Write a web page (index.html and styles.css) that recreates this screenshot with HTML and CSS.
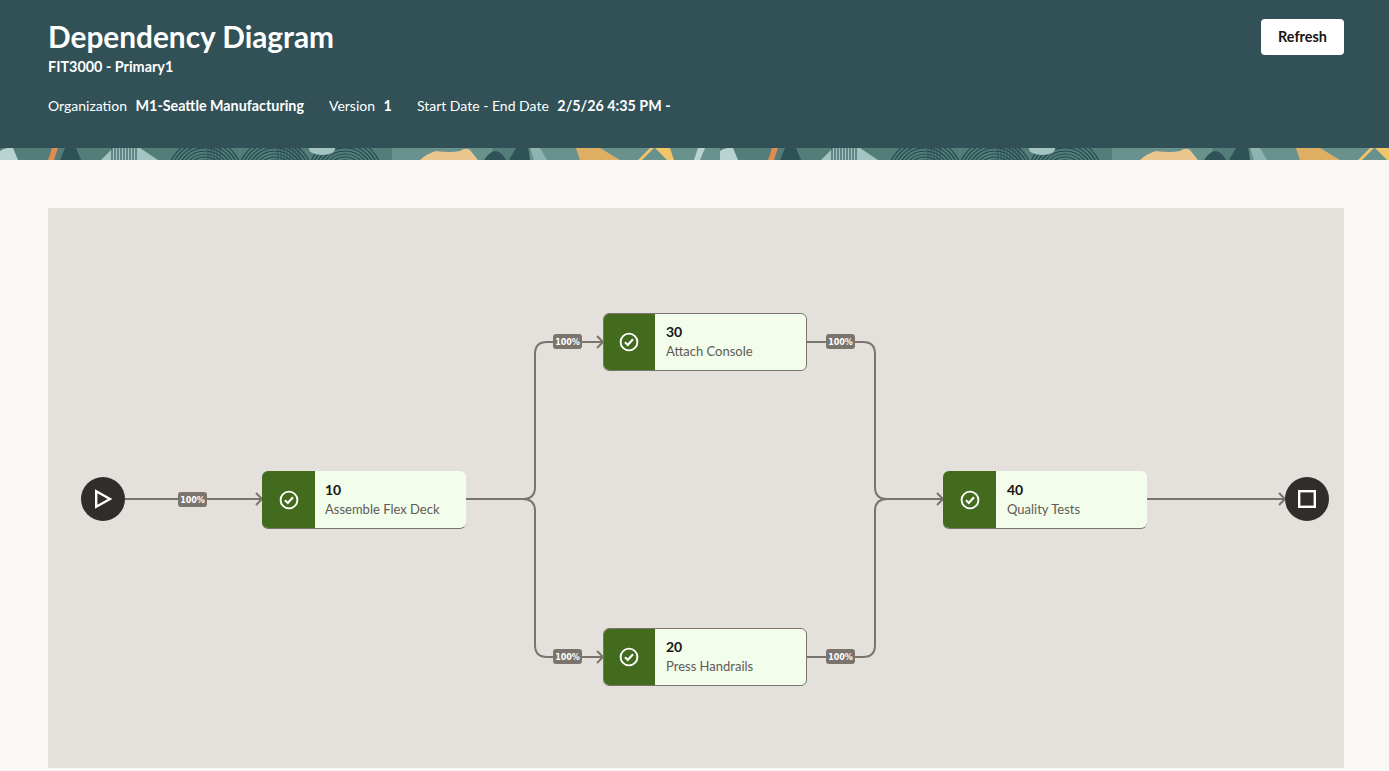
FILE: index.html
```html
<!DOCTYPE html>
<html lang="en">
<head>
    <meta charset="UTF-8">
    <title>Dependency Diagram</title>
    <link rel="stylesheet" href="styles.css">
</head>
<body>

<header class="top">
    <div class="top-text">
        <h1 class="title">Dependency Diagram</h1>
        <div class="subtitle">FIT3000 - Primary1</div>
        <div class="meta">
            <span class="meta-item">Organization <strong>M1-Seattle Manufacturing</strong></span>
            <span class="meta-item">Version <strong>1</strong></span>
            <span class="meta-item">Start Date - End Date <strong>2/5/26 4:35 PM -</strong></span>
        </div>
    </div>
    <button class="refresh" type="button">Refresh</button>
</header>

<!-- decorative band, repeats every 720px -->
<svg class="band" width="1389" height="12" xmlns="http://www.w3.org/2000/svg">
    <defs>
        <g id="rings" fill="none" stroke="#24474c" stroke-width="1.2">
            <circle r="16"/><circle r="19"/><circle r="22"/><circle r="25"/><circle r="28"/>
            <circle r="31"/><circle r="34"/><circle r="37"/>
        </g>
        <pattern id="bandtile" width="720" height="12" patternUnits="userSpaceOnUse">
            <rect width="720" height="12" fill="#527d79"/>
            <path d="M0 12V3Q6 -1 13 0L18 12Z" fill="#b9d3d3"/>
            <path d="M52 0H58L54 12H48Z" fill="#e08c50"/>
            <path d="M60 12L65 0H76L81 12Z" fill="#2f5257"/>
            <path d="M101 12L113 0H140L158 12Z" fill="#a3c4c0"/>
            <path d="M112 12V0M115 12V0M118 12V0M121 12V0M124 12V0M127 12V0M130 12V0M133 12V0M136 12V0" stroke="#24474c" stroke-width="1"/>
            <use href="#rings" x="205" y="28"/>
            <use href="#rings" x="275" y="28"/>
            <use href="#rings" x="345" y="28"/>
            <path d="M208 0V12M211 0V12M214 0V12M217 0V12M220 0V12M278 0V12M281 0V12M284 0V12M287 0V12M290 0V12M293 0V12M296 0V12M299 0V12" stroke="#24474c" stroke-width="0.8"/>
            <ellipse cx="322" cy="1" rx="13" ry="6" fill="#a3c4c0"/>
            <rect x="392" width="100" height="12" fill="#69918d"/>
            <path d="M420 12Q426 6 436 3Q450 5 460 3Q466 -1 470 2L478 12Z" fill="#e8c68e"/>
            <path d="M484 12Q490 3 496 3Q502 4 506 12Z" fill="#2f5257"/>
            <path d="M509 12L516 0H528L530 12Z" fill="#2f5257"/>
            <rect x="530" width="190" height="12" fill="#69918d"/>
            <path d="M530 0H540L547 12H534Z" fill="#8fb3b0"/>
            <path d="M576 0H600L620 12H580Z" fill="#deaf63"/>
            <path d="M650 0H654L642 12H638Z" fill="#f0c468"/>
            <path d="M655 0H670L674 12H667Z" fill="#f0c468"/>
            <path d="M694 12L698 0H705L700 12Z" fill="#b9d3d3"/>
        </pattern>
    </defs>
    <rect width="1389" height="12" fill="url(#bandtile)"/>
</svg>

<main class="content">
    <div class="diagram">
        <svg class="edges" width="1296" height="560" xmlns="http://www.w3.org/2000/svg">
            <g fill="none" stroke="#7a746d" stroke-width="2">
                <path d="M77 291H214"/>
                <path d="M418 291H475Q487 291 487 279V146Q487 134 499 134H555"/>
                <path d="M418 291H475Q487 291 487 303V437Q487 449 499 449H555"/>
                <path d="M759 134H815Q827 134 827 146V279Q827 291 839 291H895"/>
                <path d="M759 449H815Q827 449 827 437V303Q827 291 839 291H895"/>
                <path d="M1099 291H1237"/>
                <path d="M208 285L214 291L208 297"/>
                <path d="M549 128L555 134L549 140"/>
                <path d="M549 443L555 449L549 455"/>
                <path d="M889 285L895 291L889 297"/>
                <path d="M1231 285L1237 291L1231 297"/>
            </g>
        </svg>

        <div class="terminal start">
            <svg width="20" height="20" viewBox="0 0 20 20"><path d="M3.2 2.2L17 10L3.2 17.8Z" fill="none" stroke="#fff" stroke-width="2.4"/></svg>
        </div>
        <div class="terminal end">
            <svg width="20" height="20" viewBox="0 0 20 20"><rect x="2.2" y="2.2" width="15.6" height="15.6" fill="none" stroke="#fff" stroke-width="2.4"/></svg>
        </div>

        <span class="pct pct-a">100%</span>
        <span class="pct pct-b">100%</span>
        <span class="pct pct-c">100%</span>
        <span class="pct pct-d">100%</span>
        <span class="pct pct-e">100%</span>

        <div class="node node-10">
            <div class="node-icon"><svg width="20" height="20" viewBox="0 0 20 20"><circle cx="10" cy="10" r="8.4" fill="none" stroke="#fff" stroke-width="1.9"/><path d="M6 10.3L8.8 13L14 7.3" fill="none" stroke="#fff" stroke-width="2.2"/></svg></div>
            <div class="node-text"><strong>10</strong><span>Assemble Flex Deck</span></div>
        </div>
        <div class="node node-30">
            <div class="node-icon"><svg width="20" height="20" viewBox="0 0 20 20"><circle cx="10" cy="10" r="8.4" fill="none" stroke="#fff" stroke-width="1.9"/><path d="M6 10.3L8.8 13L14 7.3" fill="none" stroke="#fff" stroke-width="2.2"/></svg></div>
            <div class="node-text"><strong>30</strong><span>Attach Console</span></div>
        </div>
        <div class="node node-20">
            <div class="node-icon"><svg width="20" height="20" viewBox="0 0 20 20"><circle cx="10" cy="10" r="8.4" fill="none" stroke="#fff" stroke-width="1.9"/><path d="M6 10.3L8.8 13L14 7.3" fill="none" stroke="#fff" stroke-width="2.2"/></svg></div>
            <div class="node-text"><strong>20</strong><span>Press Handrails</span></div>
        </div>
        <div class="node node-40">
            <div class="node-icon"><svg width="20" height="20" viewBox="0 0 20 20"><circle cx="10" cy="10" r="8.4" fill="none" stroke="#fff" stroke-width="1.9"/><path d="M6 10.3L8.8 13L14 7.3" fill="none" stroke="#fff" stroke-width="2.2"/></svg></div>
            <div class="node-text"><strong>40</strong><span>Quality Tests</span></div>
        </div>
    </div>
</main>

</body>
</html>
```

FILE: styles.css
```css
*{
    padding: 0;
    margin: 0;
    box-sizing: border-box;
}
body {
    background-color: #F9F8F6;
    font-family: Lato, "Noto Sans", sans-serif;
    font-size: 14px;
    color: #161513;
    height: 771px;
    overflow: hidden;
}

.top{
    display: flex;
    justify-content: space-between;
    align-items: flex-start;
    height: 148px;
    padding: 19px 45px 0 48px;
    background-color: #315157;
    color: #FFFFFF;
}

.title{
    font-size: 29.8px;
    line-height: 36px;
    font-weight: 700;
}

.subtitle{
    font-size: 14.4px;
    line-height: 18px;
    margin-top: 3px;
    font-weight: 700;
}

.meta{
    display: flex;
    gap: 25px;
    margin-top: 20px;
    line-height: 20px;
}

.meta strong{
    margin-left: 5px;
    font-size: 14.3px;
}

.refresh{
    width: 83px;
    height: 36px;
    padding-bottom: 2px;
    background-color: #FFFFFF;
    color: #161513;
    border: 0;
    border-radius: 4px;
    font-family: inherit;
    font-size: 14.4px;
    font-weight: 700;
}

.band{
    display: block;
}

.content{
    padding: 48px 45px 0 48px;
}

.diagram{
    position: relative;
    height: 560px;
    background-color: #E4E1DC;
}

.edges{
    position: absolute;
    left: 0;
    top: 0;
}

.terminal{
    position: absolute;
    top: 269px;
    width: 44px;
    height: 44px;
    border-radius: 50%;
    background-color: #312D2A;
    display: flex;
    align-items: center;
    justify-content: center;
}

.start{ left: 33px; }
.end{ left: 1237px; }

.pct{
    position: absolute;
    width: 29px;
    height: 15px;
    border-radius: 3px;
    background-color: #7A746D;
    color: #FFFFFF;
    font-family: "DejaVu Sans", sans-serif;
    font-size: 8px;
    line-height: 17px;
    font-weight: 700;
    text-align: center;
}

.pct-a{ left: 130px; top: 284px; }
.pct-b{ left: 505px; top: 126px; }
.pct-c{ left: 505px; top: 441px; }
.pct-d{ left: 778px; top: 126px; }
.pct-e{ left: 778px; top: 441px; }

.node{
    position: absolute;
    display: flex;
    width: 204px;
    height: 58px;
    border: 1px solid #7A746D;
    border-radius: 6px;
    background-color: #F2FDEC;
    overflow: hidden;
}

.node-10{ left: 214px; top: 263px; }
.node-40{ left: 895px; top: 263px; }
.node-30{ left: 555px; top: 105px; }
.node-20{ left: 555px; top: 420px; }

.node-10, .node-40{
    border-width: 0 0 1px;
}

.node-icon{
    width: 51px;
    padding-right: 1px;
    background-color: #436B1E;
    display: flex;
    align-items: center;
    justify-content: center;
}

.node-10 .node-icon, .node-40 .node-icon{
    width: 53px;
    padding-right: 0;
}

.node-text{
    display: flex;
    flex-direction: column;
    justify-content: center;
    padding: 0 0 1px 11px;
    line-height: 19px;
}

.node-10 .node-text{
    padding-left: 10px;
}

.node-text span{
    margin-top: 1px;
    font-size: 13px;
    color: #5F5A55;
}
```
